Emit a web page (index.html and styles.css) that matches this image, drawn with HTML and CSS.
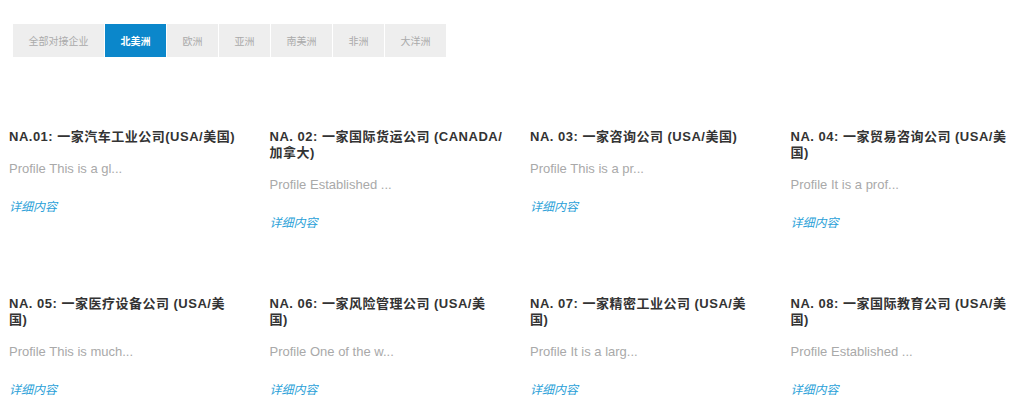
FILE: index.html
```html
<!DOCTYPE html>
<html lang="zh">
<head>
<meta charset="utf-8">
<title>对接企业</title>
<link rel="stylesheet" href="styles.css">
</head>
<body>
<div class="page">
  <nav class="tabs">
    <a class="tab">全部对接企业</a>
    <a class="tab active">北美洲</a>
    <a class="tab">欧洲</a>
    <a class="tab">亚洲</a>
    <a class="tab">南美洲</a>
    <a class="tab">非洲</a>
    <a class="tab">大洋洲</a>
  </nav>
  <div class="grid">
    <div class="card">
      <h3 class="title">NA.01: 一家汽车工业公司(USA/美国)</h3>
      <p class="profile">Profile This is a gl...</p>
      <a class="more">详细内容</a>
    </div>
    <div class="card">
      <h3 class="title">NA. 02: 一家国际货运公司 (CANADA/<wbr>加拿大)</h3>
      <p class="profile">Profile Established ...</p>
      <a class="more">详细内容</a>
    </div>
    <div class="card">
      <h3 class="title">NA. 03: 一家咨询公司 (USA/美国)</h3>
      <p class="profile">Profile This is a pr...</p>
      <a class="more">详细内容</a>
    </div>
    <div class="card">
      <h3 class="title">NA. 04: 一家贸易咨询公司 (USA/美国)</h3>
      <p class="profile">Profile It is a prof...</p>
      <a class="more">详细内容</a>
    </div>
    <div class="card">
      <h3 class="title">NA. 05: 一家医疗设备公司 (USA/美国)</h3>
      <p class="profile">Profile This is much...</p>
      <a class="more">详细内容</a>
    </div>
    <div class="card">
      <h3 class="title">NA. 06: 一家风险管理公司 (USA/美国)</h3>
      <p class="profile">Profile One of the w...</p>
      <a class="more">详细内容</a>
    </div>
    <div class="card">
      <h3 class="title">NA. 07: 一家精密工业公司 (USA/美国)</h3>
      <p class="profile">Profile It is a larg...</p>
      <a class="more">详细内容</a>
    </div>
    <div class="card">
      <h3 class="title">NA. 08: 一家国际教育公司 (USA/美国)</h3>
      <p class="profile">Profile Established ...</p>
      <a class="more">详细内容</a>
    </div>
  </div>
</div>
</body>
</html>
```
FILE: styles.css
```css
html, body {
  margin: 0;
  padding: 0;
  background: #ffffff;
  overflow: hidden;
}
body {
  font-family: "Liberation Sans", "Noto Sans CJK SC", sans-serif;
  color: #333333;
}
.page {
  padding-top: 24px;
}
.tabs {
  display: flex;
  gap: 1px;
  margin-left: 13px;
}
.tab {
  display: block;
  height: 33px;
  line-height: 33px;
  padding: 0 15.5px;
  background: #eeeeee;
  color: #aaaaaa;
  font-size: 10px;
  font-family: "Noto Sans CJK SC", sans-serif;
}
.tab.active {
  background: #0b87cb;
  color: #ffffff;
  font-weight: bold;
}
.grid {
  display: grid;
  grid-template-columns: repeat(4, 260.5px);
  row-gap: 65px;
  margin-top: 72px;
  padding-left: 9px;
}
.card {
  padding-right: 27px;
}
.title {
  margin: 0 0 16px;
  font-size: 13px;
  line-height: 16px;
  font-weight: bold;
  letter-spacing: 0.5px;
  color: #333333;
}
.profile {
  margin: 0 0 22px;
  font-size: 13px;
  line-height: 16px;
  color: #a9a9a9;
}
.more {
  display: block;
  font-size: 12px;
  line-height: 16px;
  font-style: italic;
  color: #2a9fd8;
}
```
